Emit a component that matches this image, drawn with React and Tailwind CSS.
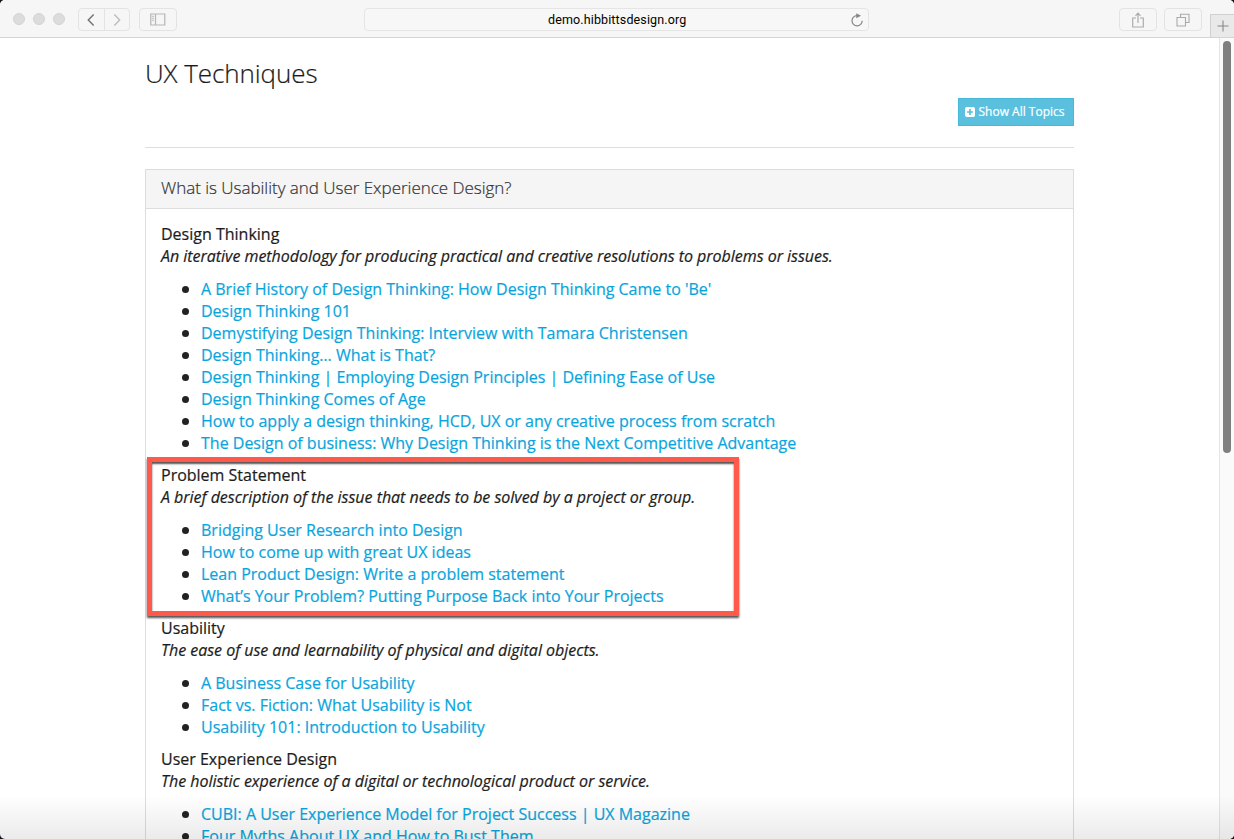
import React from "react";

const topics = [
  {
    title: "Design Thinking",
    text: "An iterative methodology for producing practical and creative resolutions to problems or issues.",
    links: [
      "A Brief History of Design Thinking: How Design Thinking Came to 'Be'",
      "Design Thinking 101",
      "Demystifying Design Thinking: Interview with Tamara Christensen",
      "Design Thinking… What is That?",
      "Design Thinking | Employing Design Principles | Defining Ease of Use",
      "Design Thinking Comes of Age",
      "How to apply a design thinking, HCD, UX or any creative process from scratch",
      "The Design of business: Why Design Thinking is the Next Competitive Advantage",
    ],
  },
  {
    title: "Problem Statement",
    text: "A brief description of the issue that needs to be solved by a project or group.",
    marked: true,
    links: [
      "Bridging User Research into Design",
      "How to come up with great UX ideas",
      "Lean Product Design: Write a problem statement",
      "What’s Your Problem? Putting Purpose Back into Your Projects",
    ],
  },
  {
    title: "Usability",
    text: "The ease of use and learnability of physical and digital objects.",
    links: [
      "A Business Case for Usability",
      "Fact vs. Fiction: What Usability is Not",
      "Usability 101: Introduction to Usability",
    ],
  },
  {
    title: "User Experience Design",
    text: "The holistic experience of a digital or technological product or service.",
    links: [
      "CUBI: A User Experience Model for Project Success | UX Magazine",
      "Four Myths About UX and How to Bust Them",
    ],
  },
];

function Toolbar() {
  return (
    <header className="relative flex h-[38px] shrink-0 items-start border-b border-[#d3d3d3] bg-[#f6f6f6] pt-[8px]">
      <div className="ml-[13px] mt-[5px] flex gap-[8px]">
        <span className="size-[12px] rounded-full border border-[#d3d3d3] bg-[#dcdcdc]" />
        <span className="size-[12px] rounded-full border border-[#d3d3d3] bg-[#dcdcdc]" />
        <span className="size-[12px] rounded-full border border-[#d3d3d3] bg-[#dcdcdc]" />
      </div>
      <div className="ml-[13px] flex h-[23px] w-[52px] rounded-[4px] border border-[#e3e3e3]">
        <div className="flex w-[26px] items-center justify-center border-r border-[#e3e3e3] pr-[1px]">
          <svg width="8" height="12" viewBox="0 0 8 12" fill="none" stroke="#777" strokeWidth="1.5"><path d="M6.7.5 1.3 6l5.4 5.5" /></svg>
        </div>
        <div className="flex flex-1 items-center justify-center">
          <svg width="8" height="12" viewBox="0 0 8 12" fill="none" stroke="#bdbdbd" strokeWidth="1.4"><path d="M1.3.5 6.7 6l-5.4 5.5" /></svg>
        </div>
      </div>
      <div className="ml-[9px] flex h-[23px] w-[38px] items-center justify-center rounded-[4px] border border-[#e3e3e3]">
        <svg width="16" height="13" viewBox="0 0 16 13" fill="none" stroke="#b5b5b5"><path d="M.8 1h14v11H.8zM5.5 1v11" strokeWidth="1.2" /><path d="M2 3.3h2M2 5.3h2M2 7.3h2" strokeWidth=".9" /></svg>
      </div>
      <div className="ml-[187px] flex h-[23px] w-[505px] items-center rounded-[4px] border border-[#e5e5e5] bg-[#f7f7f7]">
        <span className="ml-[183px] w-[140px] whitespace-nowrap font-[Roboto,sans-serif] text-[12.5px] leading-[20px] tracking-[0.13px] text-black">demo.hibbittsdesign.org</span>
        <svg className="ml-[162px]" width="14" height="14" viewBox="0 0 14 14" fill="none" stroke="#858585" strokeWidth="1.2"><path d="M7 2.6A5.1 5.1 0 1 0 12.2 7.8" /><path d="M6.3.2 11 2.7 6.3 5.3z" fill="#858585" stroke="none" /></svg>
      </div>
      <div className="ml-[250px] flex h-[23px] w-[38px] items-center justify-center rounded-[4px] border border-[#e3e3e3]">
        <svg width="14" height="16" viewBox="0 0 14 16" fill="none" stroke="#aaa" strokeWidth="1.15"><path d="M5 6H1.7v9h10.6V6H9M7 11V1.2M4.5 3.8 7 1.2l2.5 2.6" /></svg>
      </div>
      <div className="ml-[7px] flex h-[23px] w-[38px] items-center justify-center rounded-[4px] border border-[#e3e3e3]">
        <svg width="14" height="14" viewBox="0 0 14 14" fill="none" stroke="#aaa" strokeWidth="1.1"><path d="M1 4.5h8.5V13H1zM4.5 4.5V1.3H13v8.2H9.5" /></svg>
      </div>
      <div className="ml-[8px] mt-[6px] flex h-[23px] flex-1 items-center justify-center border-l border-t border-[#d0d0d0] bg-[#e9e9e9]">
        <svg width="12" height="12" viewBox="0 0 12 12" fill="none" stroke="#888" strokeWidth="1.1"><path d="M6 .5v11M.5 6h11" /></svg>
      </div>
    </header>
  );
}

function Topic({ topic }) {
  return (
    <section className="relative mb-[10px]">
      <h3 className="leading-[22px]">{topic.title}</h3>
      <p className="mb-[11px] whitespace-nowrap italic leading-[22px] tracking-[-0.025px]">{topic.text}</p>
      <ul className="pl-[20px]">
        {topic.links.map((link) => (
          <li key={link} className="flex h-[22px] items-center whitespace-nowrap leading-[22px]">
            <span className="ml-[1px] mr-[12px] mt-[1px] size-[7px] rounded-full bg-[#222]" />
            <a className="text-[#08a5dd]">{link}</a>
          </li>
        ))}
      </ul>
      {topic.marked && (
        <div className="absolute -left-[14px] -top-[7px] h-[159px] w-[592px] border-[5px] border-[#ff594b] shadow-[0_2px_2px_#555,inset_0_2px_2px_#555]" />
      )}
    </section>
  );
}

export default function App() {
  return (
    <div className="h-[839px] w-[1234px] overflow-hidden bg-[#10151f]">
      <div className="relative flex h-full flex-col overflow-hidden rounded-[5px] bg-white font-['Open_Sans',sans-serif] text-[16px] text-[#1c1c1c]">
        <Toolbar />
        <div className="flex min-h-0 flex-1">
          <main className="min-w-0 flex-1 overflow-hidden pl-[145px] pt-[17px] [-webkit-text-stroke:0.2px_currentColor]">
            <div className="w-[929px]">
              <h1 className="h-[42px] text-[26px] font-light leading-[36px] tracking-[-0.08px]">UX Techniques</h1>
              <div className="flex justify-end pt-[1px]">
                <button className="flex h-[28px] w-[116px] items-center justify-center gap-[3px] whitespace-nowrap border border-[#46b8da] bg-[#5bc0de] pr-[2px] text-[12px] text-white">
                  <svg width="10" height="10" viewBox="0 0 10 10"><rect width="10" height="10" rx="1.8" fill="white" /><path d="M5 2v6M2 5h6" stroke="#5bc0de" strokeWidth="1.7" /></svg>
                  Show All Topics
                </button>
              </div>
              <div className="mt-[21px] h-px bg-[#dedede]" />
              <div className="mt-[21px] border border-[#dddddd]">
                <h2 className="flex h-[39px] items-center border-b border-[#dddddd] bg-[#f5f5f5] pb-[2px] pl-[15px] text-[17px] font-light tracking-[-0.02px] text-[#333]">What is Usability and User Experience Design?</h2>
                <div className="pl-[15px] pt-[14px]">
                  {topics.map((topic) => <Topic key={topic.title} topic={topic} />)}
                </div>
              </div>
            </div>
          </main>
          <aside className="w-[15px] shrink-0 border-l border-[#e5e5e5] bg-[#fafafa] pl-[3px] pt-[3px]">
            <div className="h-[412px] w-[8px] rounded-full bg-[#7f7f7f]" />
          </aside>
        </div>
        <div className="pointer-events-none absolute inset-x-0 bottom-0 h-[44px] bg-linear-to-b from-transparent to-black/8" />
      </div>
    </div>
  );
}
